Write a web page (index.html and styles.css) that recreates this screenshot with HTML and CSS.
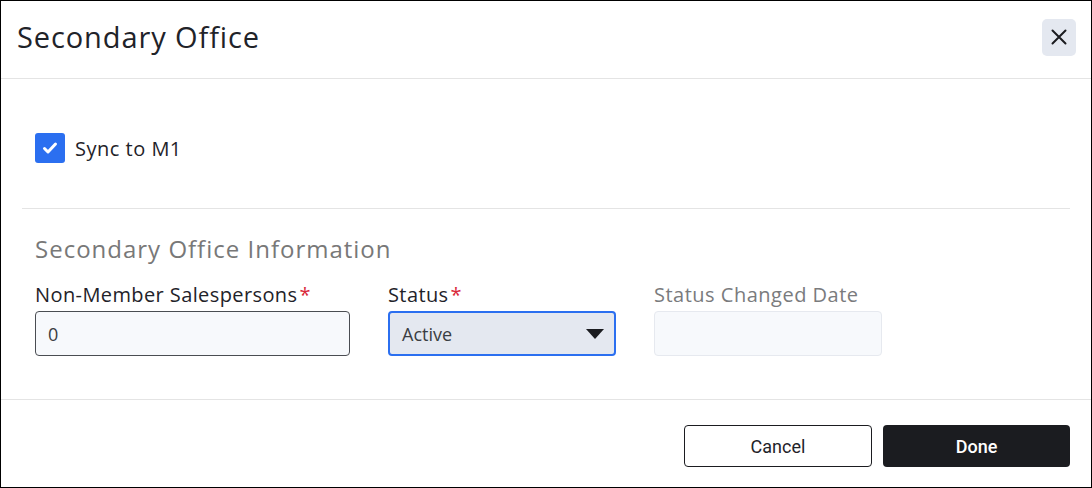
FILE: index.html
```html
<!DOCTYPE html>
<html lang="en">
<head>
    <meta charset="UTF-8">
    <meta name="viewport" content="width=device-width, initial-scale=1.0">
    <title>Secondary Office</title>
    <link rel="stylesheet" href="styles.css">
</head>
<body>

<div class="modal">
    <div class="modal-header">
        <h1>Secondary Office</h1>
        <button class="close" aria-label="Close">
            <svg width="16" height="16" viewBox="0 0 16 16">
                <path d="M1.5 1.5 L14.5 14.5 M14.5 1.5 L1.5 14.5" stroke="#1b1c20" stroke-width="2" stroke-linecap="round" fill="none"/>
            </svg>
        </button>
    </div>

    <div class="modal-body">
        <label class="check-row">
            <span class="checkbox">
                <svg width="16" height="16" viewBox="0 0 16 16">
                    <path d="M2.5 8.5 L6 12 L13.5 4" stroke="#fff" stroke-width="3" stroke-linecap="round" stroke-linejoin="round" fill="none"/>
                </svg>
            </span>
            <span class="check-label">Sync to M1</span>
        </label>

        <div class="section">
            <h2>Secondary Office Information</h2>
            <div class="fields">
                <div class="field wide">
                    <label for="salespersons">Non-Member Salespersons<span class="req">*</span></label>
                    <input type="text" id="salespersons" value="0">
                </div>
                <div class="field">
                    <label for="status">Status<span class="req">*</span></label>
                    <div class="select">
                        <span>Active</span>
                        <svg width="18" height="10" viewBox="0 0 18 10">
                            <path d="M0 0 L18 0 L9 10 Z" fill="#1b1c20"/>
                        </svg>
                    </div>
                </div>
                <div class="field disabled">
                    <label for="changed">Status Changed Date</label>
                    <input type="text" id="changed" disabled>
                </div>
            </div>
        </div>
    </div>

    <div class="modal-footer">
        <button class="button cancel">Cancel</button>
        <button class="button done">Done</button>
    </div>
</div>

</body>
</html>
```

FILE: styles.css
```css
body {
    margin: 0;
    font-family: "Open Sans", "Noto Sans", sans-serif;
    color: #1f2329;
}
.modal {
    width: 1092px;
    height: 488px;
    box-sizing: border-box;
    border: 1px solid #000;
    background: #fff;
    display: flex;
    flex-direction: column;
}
.modal-header {
    height: 77px;
    border-bottom: 1px solid #e4e4e4;
    display: flex;
    align-items: center;
    justify-content: space-between;
    padding: 0 15px 0 16px;
}
.modal-header h1 {
    margin: 0;
    font-size: 29px;
    font-weight: 400;
    color: #1f2329;
    letter-spacing: 0.9px;
    padding-bottom: 6px;
}
.close {
    width: 34px;
    height: 37px;
    border: none;
    border-radius: 5px;
    background: #e4e8f0;
    display: flex;
    align-items: center;
    justify-content: center;
    padding: 0;
    cursor: pointer;
    margin-bottom: 5px;
}
.modal-body {
    flex: 1;
    padding: 0 21px;
}
.check-row {
    display: flex;
    align-items: center;
    margin: 54px 0 0 13px;
    height: 30px;
}
.checkbox {
    width: 30px;
    height: 30px;
    border-radius: 3px;
    background: #2b6ff0;
    display: flex;
    align-items: center;
    justify-content: center;
}
.check-label {
    margin-left: 10px;
    font-size: 20px;
    font-weight: 500;
    letter-spacing: 0.5px;
    color: #1f2329;
}
.section {
    margin-top: 45px;
    border-top: 1px solid #e4e4e4;
    padding: 0 13px;
}
.section h2 {
    margin: 24px 0 0;
    font-size: 24px;
    font-weight: 400;
    line-height: 32px;
    letter-spacing: 1px;
    color: #787878;
}
.fields {
    display: flex;
    gap: 38px;
    margin-top: 17px;
}
.field {
    display: flex;
    flex-direction: column;
    width: 228px;
}
.field.wide {
    width: 315px;
}
.field label {
    font-size: 20px;
    font-weight: 500;
    line-height: 26px;
    letter-spacing: 0.4px;
    margin-bottom: 3px;
    color: #1f2329;
}
.field.disabled label {
    font-weight: 400;
    letter-spacing: 0.5px;
    color: #7a7b7d;
}
.req {
    color: #d9283a;
    margin-left: 2px;
}
.field input {
    height: 45px;
    box-sizing: border-box;
    border: 1px solid #4a4d52;
    border-radius: 4px;
    background: #f7f9fc;
    padding: 0 12px;
    font-family: inherit;
    font-size: 18px;
    color: #3a3d42;
}
.field input:disabled {
    border-color: #e6e9ef;
    background: #f7f9fc;
}
.select {
    height: 45px;
    box-sizing: border-box;
    border: 2px solid #2b6ff0;
    border-radius: 4px;
    background: #e4e8f0;
    padding: 0 10px 0 12px;
    display: flex;
    align-items: center;
    justify-content: space-between;
    font-size: 18px;
    color: #3a3d42;
}
.modal-footer {
    height: 88px;
    box-sizing: border-box;
    border-top: 1px solid #e4e4e4;
    display: flex;
    justify-content: flex-end;
    gap: 11px;
    padding: 25px 21px 0 0;
}
.button {
    width: 188px;
    height: 42px;
    border-radius: 4px;
    font-family: Roboto, "Liberation Sans", sans-serif;
    font-size: 18px;
    cursor: pointer;
}
.button.cancel {
    background: #fff;
    border: 1px solid #1b1c20;
    color: #1f2329;
}
.button.done {
    width: 187px;
    background: #1b1c20;
    border: none;
    color: #fff;
    font-weight: 500;
}
```
